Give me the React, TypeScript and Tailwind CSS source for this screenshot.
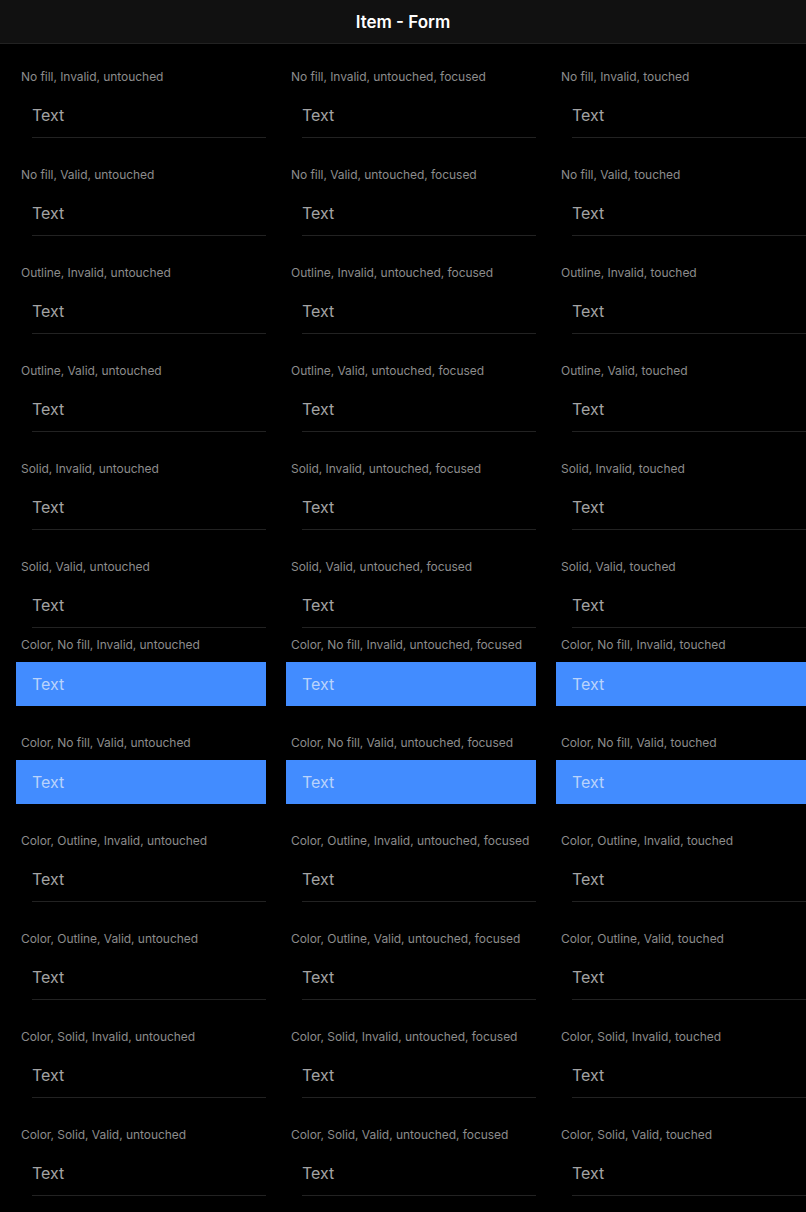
import React from "react";

const fills = ["No fill", "Outline", "Solid"];
const validity = ["Invalid", "Valid"];
const states = ["untouched", "untouched, focused", "touched"];

function makeRows(prefix: string) {
  const rows: string[][] = [];
  fills.forEach((fill) => {
    validity.forEach((v) => {
      rows.push(states.map((s) => `${prefix}${fill}, ${v}, ${s}`));
    });
  });
  return rows;
}

function FormItem({ label, colored }: { label: string; colored: boolean }) {
  return (
    <div className="flex flex-col">
      <div className="h-[18px] pl-[5px] text-[12px] leading-[18px] tracking-[-0.05px] text-[#8c8c8c] whitespace-nowrap">
        {label}
      </div>
      {colored ? (
        <div className="mt-[8px] flex h-[44px] items-center bg-[#428cff] pb-[1px] pl-4 text-[16px] text-[#b9d3fb]">
          Text
        </div>
      ) : (
        <div className="mt-[8px] h-[44px] pl-4">
          <div className="flex h-full items-center border-b border-[#222222] pb-[1px] text-[16px] text-[#a3a3a3]">
            Text
          </div>
        </div>
      )}
    </div>
  );
}

function Group({ rows, colored }: { rows: string[][]; colored: (r: number) => boolean }) {
  return (
    <div className="grid grid-cols-[250px_250px_250px] gap-x-[20px] gap-y-[28px] px-4">
      {rows.map((row, r) =>
        row.map((label) => <FormItem key={label} label={label} colored={colored(r)} />)
      )}
    </div>
  );
}

export default function App() {
  return (
    <div
      className="min-h-[1212px] w-[806px] overflow-hidden bg-black"
      style={{ fontFamily: "Inter, 'Noto Sans', sans-serif" }}
    >
      <header className="flex h-[44px] items-center justify-center border-b border-[#222222] bg-[#111111] pt-[3px]">
        <h1 className="text-[17px] font-semibold text-white">Item - Form</h1>
      </header>
      <div className="pt-[24px]">
        <Group rows={makeRows("")} colored={() => false} />
        <div className="mt-[8px]">
          <Group rows={makeRows("Color, ")} colored={(r) => r < 2} />
        </div>
      </div>
    </div>
  );
}
